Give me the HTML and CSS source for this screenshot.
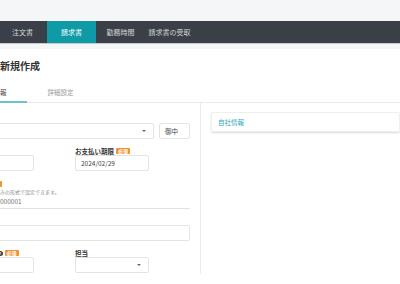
FILE: index.html
```html
<!DOCTYPE html>
<html lang="ja">
<head>
    <meta charset="UTF-8">
    <meta name="viewport" content="width=device-width, initial-scale=1.0">
    <title>請求書の新規作成</title>
    <link rel="stylesheet" href="styles.css">
</head>
<body>
    <div class="topbar"></div>
    <nav class="nav">
        <a class="nav-item">注文書</a>
        <a class="nav-item active">請求書</a>
        <a class="nav-item">勤務時間</a>
        <a class="nav-item">請求書の受取</a>
    </nav>
    <div class="strip"></div>

    <main class="page">
        <h1 class="title">請求書の新規作成</h1>
        <div class="tabs">
            <div class="tab active">基本情報</div>
            <div class="tab">詳細設定</div>
        </div>

        <div class="content">
            <!-- 左側のフォーム -->
            <form class="panel">
                <div class="row">
                    <div class="input select select-wide"><span class="arrow"></span></div>
                    <div class="input honorific">御中</div>
                </div>

                <div class="grid">
                    <div>
                        <div class="label">請求日 <span class="badge">必須</span></div>
                        <div class="input"></div>
                    </div>
                    <div>
                        <div class="label">お支払い期限 <span class="badge">必須</span></div>
                        <div class="input">2024/02/29</div>
                    </div>
                </div>

                <div class="field">
                    <div class="label">請求番号 <span class="badge">必須</span></div>
                    <div class="help">※連番等を組み込みの形式で設定できます。</div>
                    <div class="underline"><span class="prefix">INV-</span>000001</div>
                </div>

                <div class="field field-wide">
                    <div class="input"></div>
                </div>

                <div class="grid">
                    <div>
                        <div class="label">入金予定日 <span class="help-icon">?</span><span class="badge">必須</span></div>
                        <div class="input"></div>
                    </div>
                    <div>
                        <div class="label">担当</div>
                        <div class="input select"><span class="arrow"></span></div>
                    </div>
                </div>
            </form>

            <!-- 右側のカード -->
            <div class="card">自社情報</div>
        </div>
    </main>
</body>
</html>
```

FILE: styles.css
```css
/* 共通 */
html, body {
    margin: 0;
    overflow: hidden;
    background-color: #fff;
    font-family: "Noto Sans CJK JP", "Noto Sans", sans-serif;
    color: #333;
}

.topbar {
    height: 21px;
    background-color: #f5f6f8;
}

/* ナビゲーション */
.nav {
    display: flex;
    height: 22px;
    margin-left: -2px;
    background-color: #3b3f47;
    border-bottom: 1px solid #c6c9cd;
}

.nav-item {
    width: 49px;
    text-align: center;
    font-size: 7px;
    line-height: 22px;
    color: #d3d6da;
}

.nav-item.active {
    background-color: #0e9ba6;
    color: #fff;
}

.strip {
    height: 5px;
    background-color: #f5f6f8;
}

/* ページ本体 */
.page {
    margin-left: -40px;
    padding-top: 10px;
}

.title {
    margin: 0;
    font-size: 10px;
    line-height: 14px;
    font-weight: 700;
    color: #333;
}

.tabs {
    display: flex;
    margin-top: 10px;
    border-bottom: 1px solid #e8e9eb;
}

.tab {
    width: 67px;
    padding: 4px 0;
    text-align: center;
    font-size: 6.5px;
    line-height: 10px;
    color: #999;
    border-bottom: 2px solid transparent;
    margin-bottom: -1px;
}

.tab.active {
    color: #444;
    border-bottom-color: #6cc3c9;
}

.content {
    display: flex;
    align-items: flex-start;
}

/* フォーム */
.panel {
    width: 230px;
    margin: 0;
    padding: 20px 10px 1px 0;
    border-right: 1px solid #ebebeb;
}

.row {
    display: flex;
    gap: 5px;
}

.grid {
    display: grid;
    grid-template-columns: 74px 74px;
    column-gap: 41px;
    margin-top: 8px;
}

.field {
    margin-top: 9px;
}

.field-wide {
    margin-top: 16px;
}

.label {
    display: flex;
    align-items: center;
    gap: 2px;
    height: 8px;
    font-size: 6.5px;
    font-weight: 700;
    color: #333;
    white-space: nowrap;
}

.badge {
    display: inline-block;
    padding: 0 2px;
    height: 6px;
    line-height: 6px;
    font-size: 5px;
    font-weight: 700;
    color: #fff;
    background-color: #f0922f;
    border-radius: 1px;
}

.help-icon {
    display: inline-block;
    width: 5px;
    height: 5px;
    margin-left: 3px;
    border-radius: 50%;
    background-color: #444;
    color: #fff;
    font-size: 4px;
    line-height: 5px;
    text-align: center;
}

.help {
    margin-top: 1px;
    font-size: 5px;
    line-height: 6px;
    color: #888;
    white-space: nowrap;
}

.underline {
    height: 13px;
    line-height: 13px;
    font-size: 6.5px;
    color: #777;
    border-bottom: 1px solid #e2e2e2;
}

.prefix {
    display: inline-block;
    width: 40px;
}

.input {
    display: flex;
    align-items: center;
    box-sizing: border-box;
    height: 16px;
    padding: 0 5px;
    border: 1px solid #e4e4e4;
    border-radius: 2px;
    font-size: 6.5px;
    color: #444;
    background-color: #fff;
}

.select {
    justify-content: flex-end;
    padding-right: 7px;
}

.select-wide {
    width: 194px;
}

.honorific {
    width: 31px;
}

.arrow {
    width: 0;
    height: 0;
    border-left: 2px solid transparent;
    border-right: 2px solid transparent;
    border-top: 2px solid #666;
}

/* 右側カード */
.card {
    display: flex;
    align-items: center;
    box-sizing: border-box;
    width: 200px;
    height: 20px;
    margin: 9px 0 0 10px;
    padding-left: 6px;
    border: 1px solid #efefef;
    border-radius: 2px;
    box-shadow: 0 1px 2px rgba(0, 0, 0, 0.15);
    font-size: 6.5px;
    color: #2ea3b2;
}
```
